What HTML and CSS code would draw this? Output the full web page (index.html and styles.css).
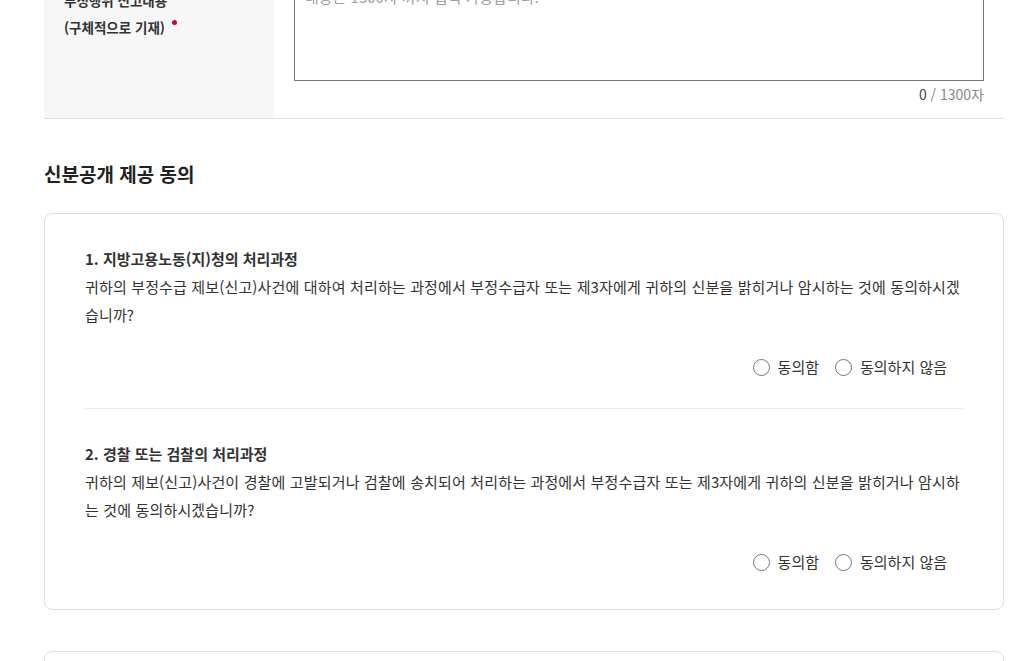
FILE: index.html
```html
<!DOCTYPE html>
<html lang="ko">
<head>
  <meta charset="UTF-8" />
  <meta name="viewport" content="width=device-width, initial-scale=1.0"/>
  <title>부정수급 신고</title>
  <link rel="stylesheet" href="styles.css">
</head>
<body>

  <div class="page">
    <div class="form-row">
      <div class="form-label">
        부정행위 신고내용<br>
        (구체적으로 기재)<span class="req"></span>
      </div>
      <div class="form-field">
        <textarea class="report-text" maxlength="1300" placeholder="내용은 1300자 까지 입력 가능합니다."></textarea>
        <div class="counter"><b>0</b> / 1300자</div>
      </div>
    </div>

    <h2 class="section-title">신분공개 제공 동의</h2>

    <div class="agree-card">
      <div class="agree-item">
        <h3>1. 지방고용노동(지)청의 처리과정</h3>
        <p>귀하의 부정수급 제보(신고)사건에 대하여 처리하는 과정에서 부정수급자 또는 제3자에게 귀하의 신분을 밝히거나 암시하는 것에 동의하시겠습니까?</p>
        <div class="radios">
          <label><input type="radio" name="agree1" value="Y"> 동의함</label>
          <label><input type="radio" name="agree1" value="N"> 동의하지 않음</label>
        </div>
      </div>
      <div class="agree-item">
        <h3>2. 경찰 또는 검찰의 처리과정</h3>
        <p>귀하의 제보(신고)사건이 경찰에 고발되거나 검찰에 송치되어 처리하는 과정에서 부정수급자 또는 제3자에게 귀하의 신분을 밝히거나 암시하는 것에 동의하시겠습니까?</p>
        <div class="radios">
          <label><input type="radio" name="agree2" value="Y"> 동의함</label>
          <label><input type="radio" name="agree2" value="N"> 동의하지 않음</label>
        </div>
      </div>
    </div>

    <div class="agree-card next-card"></div>
  </div>

</body>
</html>
```

FILE: styles.css
```css
/* base */
body {
  margin: 0;
  font-family: "Noto Sans CJK KR", "Noto Sans", sans-serif;
  color: #333;
  background: #fff;
  overflow: hidden;
}

.page {
  width: 960px;
  margin: -60px 0 0 44px;
}

/* report row */
.form-row {
  display: flex;
  border-bottom: 1px solid #e2e2e2;
}

.form-label {
  width: 230px;
  box-sizing: border-box;
  padding: 47px 20px 0;
  background: #f7f7f7;
  font-size: 13.5px;
  font-weight: 700;
  line-height: 27px;
  color: #333;
}

.req {
  display: inline-block;
  width: 5px;
  height: 5px;
  margin-left: 7px;
  border-radius: 50%;
  background: #c8004f;
  vertical-align: 8px;
}

.form-field {
  flex: 1;
  padding: 20px 20px 14px;
}

.report-text {
  display: block;
  width: 100%;
  height: 121px;
  box-sizing: border-box;
  padding: 26px 10px 10px;
  border: 1px solid #777;
  font-family: inherit;
  font-size: 15px;
  line-height: 20px;
  resize: none;
  outline: none;
}

.report-text::placeholder {
  color: #a0a0a0;
}

.counter {
  margin-top: 3px;
  text-align: right;
  font-size: 14px;
  line-height: 20px;
  color: #888;
}

.counter b {
  color: #444;
  font-weight: 400;
}

/* consent section */
.section-title {
  margin: 41px 0 25px;
  font-size: 19px;
  line-height: 28px;
  font-weight: 700;
  color: #222;
}

.agree-card {
  border: 1px solid #ddd;
  border-radius: 8px;
  padding: 0 40px 6px;
}

.agree-item {
  padding: 31px 0;
}

.agree-item + .agree-item {
  border-top: 1px solid #eaeaea;
}

.agree-item h3 {
  margin: 0;
  font-size: 15px;
  line-height: 28px;
  font-weight: 700;
  color: #333;
}

.agree-item p {
  margin: 0;
  font-size: 15px;
  line-height: 28px;
  letter-spacing: 0.15px;
  color: #333;
}

.radios {
  display: flex;
  justify-content: flex-end;
  gap: 16px;
  margin-top: 28px;
  padding-right: 16px;
  font-size: 15px;
  line-height: 20px;
}

.radios label {
  display: flex;
  align-items: center;
  gap: 8px;
  cursor: pointer;
}

.radios input {
  appearance: none;
  width: 17px;
  height: 17px;
  margin: 0;
  border: 1px solid #777;
  border-radius: 50%;
  background: #fff;
}

.next-card {
  margin-top: 41px;
  height: 120px;
}
```
